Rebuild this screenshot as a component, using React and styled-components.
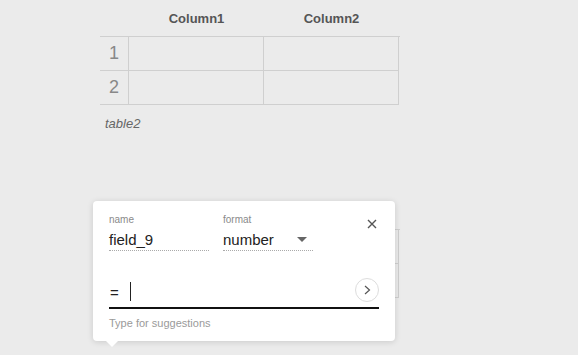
import React from 'react'
import styled, { createGlobalStyle } from 'styled-components'

const GlobalStyle = createGlobalStyle`
  html, body {
    margin: 0;
    padding: 0;
    background: #ebebeb;
    font-family: "Liberation Sans", Arial, sans-serif;
  }
`

const Page = styled.div`
  position: relative;
  width: 578px;
  height: 355px;
  overflow: hidden;
  padding-left: 100px;
  box-sizing: border-box;
`

const TableBlock = styled.div`
  width: 300px;
  margin-bottom: ${props => props.gap || 0}px;
`

const Grid = styled.div`
  display: grid;
  grid-template-columns: 29px 135px 135px;
  border-top: ${props => (props.ruled ? '1px solid #cfcfcf' : 'none')};
`

const HeadCell = styled.div`
  height: 36px;
  display: flex;
  align-items: center;
  justify-content: center;
  font-size: 13px;
  font-weight: 700;
  color: #555;
`

const RowNum = styled.div`
  height: 33px;
  display: flex;
  align-items: center;
  justify-content: center;
  font-size: 18px;
  color: #888;
  border-bottom: 1px solid #cfcfcf;
  border-right: 1px solid #cfcfcf;
`

const Cell = styled.div`
  height: 33px;
  border-bottom: 1px solid #cfcfcf;
  border-right: 1px solid #cfcfcf;
`

const Caption = styled.div`
  font-size: 13px;
  font-style: italic;
  color: #666;
  padding: 11px 0 0 5px;
  height: 26px;
`

const Popup = styled.div`
  position: absolute;
  left: 93px;
  top: 201px;
  width: 302px;
  height: 140px;
  background: #fff;
  border-radius: 4px;
  box-shadow: 0 1px 6px rgba(0, 0, 0, 0.14);
  padding: 12px 16px 0 16px;
  box-sizing: border-box;

  &::after {
    content: '';
    position: absolute;
    left: 13px;
    bottom: -6px;
    border-left: 6px solid transparent;
    border-right: 6px solid transparent;
    border-top: 6px solid #fff;
  }
`

const FieldRow = styled.div`
  display: flex;
  gap: 14px;
`

const Field = styled.div`
  width: ${props => props.w}px;
`

const Label = styled.div`
  font-size: 10px;
  color: #8a8a8a;
  line-height: 12px;
  margin-top: 1px;
`

const Value = styled.div`
  display: flex;
  align-items: center;
  justify-content: space-between;
  font-size: 15px;
  color: #222;
  height: 22px;
  margin-top: 2px;
  border-bottom: 1px dotted #aaa;
`

const Caret = styled.span`
  width: 0;
  height: 0;
  margin-right: 6px;
  border-left: 5px solid transparent;
  border-right: 5px solid transparent;
  border-top: 5px solid #666;
`

const Close = styled.div`
  position: absolute;
  right: 17px;
  top: 17px;
  width: 12px;
  height: 12px;
  display: flex;
`

const Formula = styled.div`
  margin-top: 27px;
  width: 270px;
  height: 31px;
  display: flex;
  align-items: center;
  border-bottom: 2px solid #111;
  box-sizing: border-box;
  position: relative;
`

const Equals = styled.span`
  font-size: 15px;
  color: #222;
  margin-left: 1px;
`

const Cursor = styled.span`
  width: 1px;
  height: 19px;
  background: #222;
  margin-left: 11px;
  margin-top: -2px;
`

const GoButton = styled.div`
  position: absolute;
  right: 0;
  top: 0;
  width: 22px;
  height: 22px;
  border-radius: 50%;
  border: 1px solid #ddd;
  display: flex;
  align-items: center;
  justify-content: center;
`

const Hint = styled.div`
  font-size: 11px;
  color: #9a9a9a;
  margin-top: 8px;
`

const DataTable = ({ caption, gap }) => (
  <TableBlock gap={gap}>
    <Grid>
      <HeadCell />
      <HeadCell>Column1</HeadCell>
      <HeadCell>Column2</HeadCell>
    </Grid>
    <Grid ruled>
      {[1, 2].map(n => (
        <React.Fragment key={n}>
          <RowNum>{n}</RowNum>
          <Cell />
          <Cell />
        </React.Fragment>
      ))}
    </Grid>
    {caption && <Caption>{caption}</Caption>}
  </TableBlock>
)

const App = () => {
  return (
    <Page>
      <GlobalStyle />
      <DataTable caption="table2" gap={51} />
      <DataTable />
      <Popup>
        <FieldRow>
          <Field w={100}>
            <Label>name</Label>
            <Value>field_9</Value>
          </Field>
          <Field w={90}>
            <Label>format</Label>
            <Value>
              number
              <Caret />
            </Value>
          </Field>
        </FieldRow>
        <Close>
          <svg width="12" height="12" viewBox="0 0 12 12">
            <path d="M2 2 L10 10 M10 2 L2 10" stroke="#555" strokeWidth="1.4" fill="none" />
          </svg>
        </Close>
        <Formula>
          <Equals>=</Equals>
          <Cursor />
          <GoButton>
            <svg width="10" height="12" viewBox="0 0 10 12">
              <path d="M3 2 L7.5 6 L3 10" stroke="#555" strokeWidth="1.2" fill="none" />
            </svg>
          </GoButton>
        </Formula>
        <Hint>Type for suggestions</Hint>
      </Popup>
    </Page>
  )
}

export default App
